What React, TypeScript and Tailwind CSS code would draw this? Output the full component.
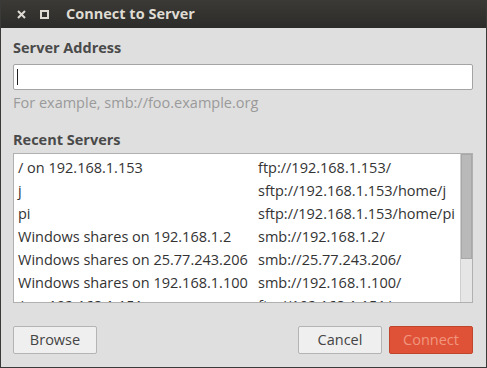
const recent: [string, string][] = [
  ["/ on 192.168.1.153", "ftp://192.168.1.153/"],
  ["j", "sftp://192.168.1.153/home/j"],
  ["pi", "sftp://192.168.1.153/home/pi"],
  ["Windows shares on 192.168.1.2", "smb://192.168.1.2/"],
  ["Windows shares on 25.77.243.206", "smb://25.77.243.206/"],
  ["Windows shares on 192.168.1.100", "smb://192.168.1.100/"],
  ["/ on 192.168.1.151", "ftp://192.168.1.151/"],
];

const font = { fontFamily: '"Open Sans", "Noto Sans", sans-serif' };

export default function App() {
  return (
    <div
      className="w-[487px] h-[368px] flex flex-col bg-[#dfdfdf] border-x border-b border-[#3a3a38] overflow-hidden text-[14.5px] text-[#3c3c3c]"
      style={font}
    >
      {/* title bar */}
      <div className="h-[28px] shrink-0 flex items-center bg-gradient-to-b from-[#3b3a36] to-[#2c2c2a] text-[#dfdbd2]">
        <div className="w-[65px] flex items-center pl-[16px] gap-[14px]">
          <svg width="9" height="9" viewBox="0 0 9 9" aria-hidden="true">
            <path d="M1 1 8 8M8 1 1 8" stroke="#dfdbd2" strokeWidth="2" />
          </svg>
          <svg width="9" height="9" viewBox="0 0 9 9" aria-hidden="true">
            <rect x="1" y="1" width="7" height="7" fill="none" stroke="#dfdbd2" strokeWidth="2" />
          </svg>
        </div>
        <span className="font-bold text-[14.5px] leading-none">Connect to Server</span>
      </div>

      <div className="flex flex-col pl-[12px] pr-[13px]">
        <div className="mt-[10px] h-[20px] leading-[20px] font-bold text-[#4a4a4a]">Server Address</div>
        <div className="mt-[6px] h-[26px] bg-white border border-[#a4a4a4] rounded-[2px] flex items-center pl-[3px]">
          <div className="w-px h-[16px] bg-[#222]" />
        </div>
        <div className="mt-[3px] h-[20px] leading-[20px] text-[#9a9a9a]">For example, smb://foo.example.org</div>
        <div className="mt-[17px] h-[20px] leading-[20px] font-bold text-[#4a4a4a]">Recent Servers</div>

        <div className="mt-[3px] h-[150px] bg-white border border-[#b0b0b0] flex overflow-hidden">
          <div className="flex-1 flex flex-col pl-[4px] pt-[2px]">
            {recent.map(([name, url]) => (
              <div key={name} className="h-[23px] shrink-0 flex items-center text-[#333]">
                <span className="w-[240px] whitespace-nowrap">{name}</span>
                <span className="whitespace-nowrap">{url}</span>
              </div>
            ))}
          </div>
          <div className="w-[12px] shrink-0 flex flex-col bg-[#e6e6e6] border-l border-[#cfcfcf]">
            <div className="h-[105px] bg-[#b9b9b9] border border-[#a8a8a8]" />
          </div>
        </div>

        <div className="mt-[23px] flex gap-[7px]">
          <button className="w-[84px] h-[28px] rounded-[2px] border border-[#b4b4b4] bg-[#efefef] text-[#444]">
            Browse
          </button>
          <div className="flex-1" />
          <button className="w-[84px] h-[28px] rounded-[2px] border border-[#b4b4b4] bg-[#efefef] text-[#444]">
            Cancel
          </button>
          <button className="w-[84px] h-[28px] rounded-[2px] border border-[#c0452d] bg-[#e05237] text-[#f0967f]">
            Connect
          </button>
        </div>
      </div>
    </div>
  );
}
